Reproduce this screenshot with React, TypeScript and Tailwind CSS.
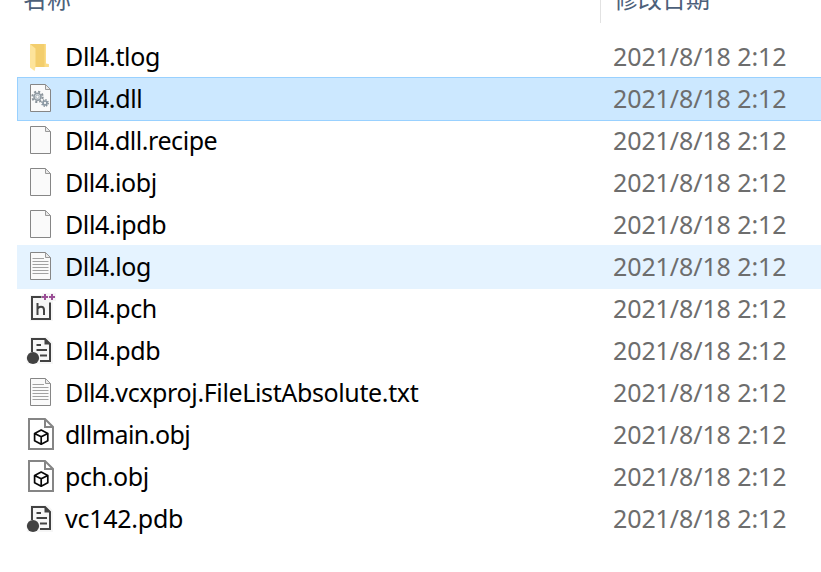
import type { ReactNode } from "react";

function Svg({ children }: { children: ReactNode }) {
  return (
    <svg className="block h-[42px] w-8 shrink-0 overflow-visible" viewBox="0 0 32 42" fill="none">
      {children}
    </svg>
  );
}

function Page({ children }: { children?: ReactNode }) {
  return (
    <Svg>
      <path d="M6.5 6.5H21.5L26.5 11.5V33.5H6.5Z" fill="#fafafa" stroke="#868686" />
      <path d="M21.5 6.5V11.5H26.5Z" fill="#e9e9e9" stroke="#9a9a9a" />
      {children}
    </Svg>
  );
}

function FolderIcon() {
  return (
    <Svg>
      <path d="M6 8H22V28L24.6 28V31H11Z" fill="#f3ce6d" />
      <path d="M20.5 8H22V27.5L24.6 28V31H20.5Z" fill="#fbdc87" />
      <path d="M6 8L11.5 12.5V31L10.6 35L6 31.5Z" fill="#fde49b" />
    </Svg>
  );
}

function DllIcon() {
  return (
    <Page>
      <circle cx="13.5" cy="18.8" r="5.2" stroke="#8b949b" strokeWidth="2" strokeDasharray="2.1 1.98" />
      <circle cx="13.5" cy="18.8" r="3.5" fill="#d5dce1" stroke="#8f99a1" strokeWidth="1.6" />
      <circle cx="13.5" cy="18.8" r="1.6" fill="#f8f8f8" stroke="#8f99a1" strokeWidth=".6" />
      <circle cx="21" cy="25" r="3.2" stroke="#7f8b94" strokeWidth="1.4" strokeDasharray="1.3 1.21" />
      <circle cx="21" cy="25" r="2" fill="#f5f5f5" stroke="#8a98a3" strokeWidth="1.7" />
    </Page>
  );
}

function TextIcon() {
  return (
    <Page>
      <path d="M8.5 12.5H20M8.5 15.5H24.5M8.5 18.5H24.5M8.5 21.5H24.5M8.5 24.5H24.5M8.5 27.5H24.5" stroke="#a2a2a2" />
    </Page>
  );
}

function HeaderIcon() {
  return (
    <Svg>
      <path d="M6 7H18V5H32V13H29V33H6Z" fill="#f6f6f6" />
      <path d="M17.5 9H8V31H26V14.5" stroke="#424242" strokeWidth="2" />
      <path d="M13.5 15V27M13.5 21Q14.3 18.7 17 18.7Q20 18.7 20 22V27" stroke="#424242" strokeWidth="2" />
      <path d="M18 9H24M21 6V12M25 9H31M28 6V12" stroke="#9b4f96" strokeWidth="2" />
    </Svg>
  );
}

function PdbIcon() {
  return (
    <Svg>
      <path d="M6 7H24L29 13V34H3L2 27L6 22Z" fill="#f6f6f6" />
      <path d="M8 22V9H21L26 14V31H16" stroke="#424242" strokeWidth="2" />
      <path d="M20.5 8V14.5H27Z" fill="#424242" />
      <path d="M12.5 15H17M12.5 20H23M16 25.5H23" stroke="#424242" strokeWidth="2" />
      <circle cx="9" cy="28" r="6.1" fill="#424242" />
    </Svg>
  );
}

function ObjIcon() {
  return (
    <Svg>
      <path d="M5 5H21L29 13V35H5Z" fill="#fff" stroke="#858585" strokeWidth="2" />
      <path d="M21 5V13H29" stroke="#858585" strokeWidth="2" />
      <path d="M17.2 16L23.8 19.4V26.8L17.2 30.2L10.6 26.8V19.4ZM10.6 19.4L17.2 22.8L23.8 19.4M17.2 22.8V30.2" stroke="#080808" strokeWidth="1.7" strokeLinejoin="round" />
    </Svg>
  );
}

type File = { name: string; icon: ReactNode; tracking: string; state?: string };

const files: File[] = [
  { name: "Dll4.tlog", icon: <FolderIcon />, tracking: "tracking-[-0.35px]" },
  { name: "Dll4.dll", icon: <DllIcon />, tracking: "tracking-[-0.4px]", state: "bg-[#cce8ff] outline outline-[#99d1ff]" },
  { name: "Dll4.dll.recipe", icon: <Page />, tracking: "tracking-[-0.45px]" },
  { name: "Dll4.iobj", icon: <Page />, tracking: "tracking-[-0.42px]" },
  { name: "Dll4.ipdb", icon: <Page />, tracking: "tracking-[-0.38px]" },
  { name: "Dll4.log", icon: <TextIcon />, tracking: "tracking-[-0.38px]", state: "bg-[#e5f3ff] outline outline-[#e5f3ff]" },
  { name: "Dll4.pch", icon: <HeaderIcon />, tracking: "tracking-[-0.4px]" },
  { name: "Dll4.pdb", icon: <PdbIcon />, tracking: "tracking-[-0.38px]" },
  { name: "Dll4.vcxproj.FileListAbsolute.txt", icon: <TextIcon />, tracking: "tracking-[-0.37px]" },
  { name: "dllmain.obj", icon: <ObjIcon />, tracking: "tracking-[-0.55px]" },
  { name: "pch.obj", icon: <ObjIcon />, tracking: "tracking-[-0.38px]" },
  { name: "vc142.pdb", icon: <PdbIcon />, tracking: "tracking-[-0.25px]" },
];

export default function App() {
  return (
    <main className="h-[572px] w-[821px] overflow-hidden bg-white font-['Noto_Sans','Noto_Sans_CJK_SC',sans-serif] text-[25px] leading-10 text-black">
      <header className="flex h-9 text-[24px] leading-6 text-[#4c607a]">
        <div className="h-[23px] w-[601px] border-r border-[#e2e2e2] pl-[23px]">
          <span className="-mt-[14px] block font-['Noto_Sans_CJK_SC',sans-serif]">名称</span>
        </div>
        <span className="-mt-[14px] pl-[13px] font-['Noto_Sans_CJK_SC',sans-serif]">修改日期</span>
      </header>
      <ul className="pl-[18px]">
        {files.map((file) => (
          <li key={file.name} className={`flex h-[42px] w-[810px] whitespace-pre pl-1.5 ${file.state ?? ""}`}>
            {file.icon}
            <span className={`w-[557px] pl-[9px] ${file.tracking}`}>{file.name}</span>
            <time className="tracking-[-0.1px] text-[#6d6d6d]">2021/8/18 2:12</time>
          </li>
        ))}
      </ul>
    </main>
  );
}
